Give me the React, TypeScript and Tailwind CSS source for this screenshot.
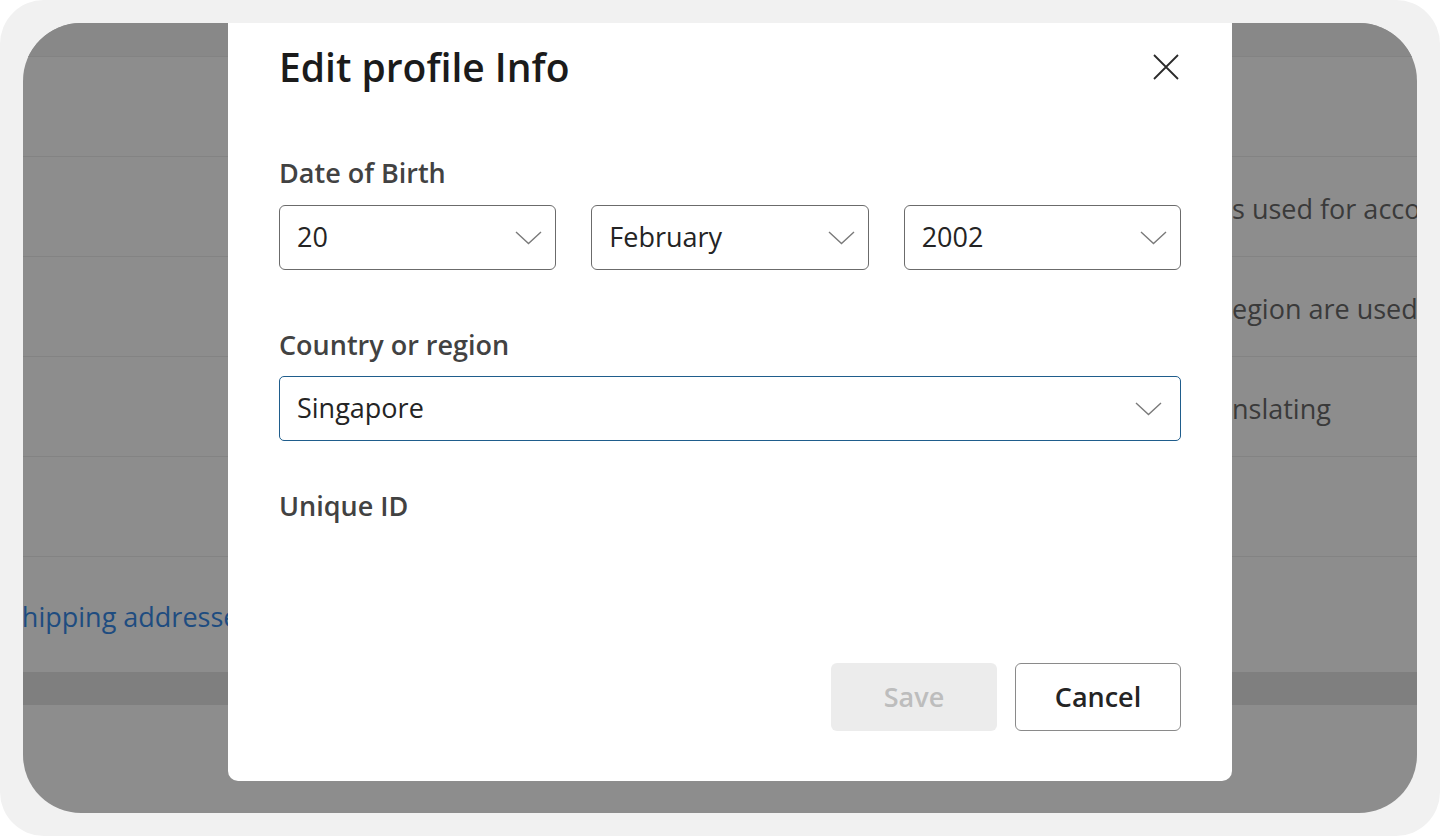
const font = { fontFamily: '"Open Sans", "Noto Sans", Arial, sans-serif' };

function Chevron() {
  return (
    <svg width="27" height="14" viewBox="0 0 27 14" fill="none" className="shrink-0">
      <polyline points="1,1 13.5,12.5 26,1" stroke="#7a7a7a" strokeWidth="1.4" />
    </svg>
  );
}

function Select({ value, focused }: { value: string; focused?: boolean }) {
  return (
    <div
      className={
        focused
          ? "flex h-[65px] items-center justify-between rounded-[5px] border-[1.5px] border-[#1f5d8c] bg-white pl-[17px] pr-[18px]"
          : "flex h-[65px] items-center justify-between rounded-[6px] border border-[#6b6b6b] bg-white pl-[17px] pr-[13px]"
      }
    >
      <span className="text-[27px] text-[#242424]">{value}</span>
      <Chevron />
    </div>
  );
}

function BackgroundRow({ prefix, text }: { prefix?: string; text?: string }) {
  return (
    <div className="flex h-[100px] items-center border-b border-[#838383] pt-[6px]">
      <div className="flex w-[1209px] shrink-0 justify-end overflow-hidden whitespace-nowrap text-[27px] text-[#3a3a3a]">
        {prefix}
      </div>
      <div className="whitespace-nowrap text-[27px] text-[#3a3a3a]">{text}</div>
    </div>
  );
}

export default function App() {
  return (
    <div className="h-[836px] w-[1440px] bg-white" style={font}>
      <div className="h-full w-full rounded-[44px] bg-[#f1f1f1] p-[23px]">
        <div className="relative h-full w-full overflow-hidden rounded-[58px] bg-[#8d8d8d]">
          {/* dimmed page behind the dialog */}
          <div className="flex flex-col">
            <div className="h-[34px] border-b border-[#838383] bg-[#888888]" />
            <BackgroundRow />
            <BackgroundRow prefix="Your date of birth i" text="s used for account safety settings" />
            <BackgroundRow prefix="Your country or r" text="egion are used for privacy and regional settings" />
            <BackgroundRow prefix="Your language is used when tra" text="nslating" />
            <BackgroundRow />
            <div className="flex h-[115px] items-center pt-[6px]">
              <span className="-ml-[14px] whitespace-nowrap text-[27px] text-[#1e4c80]">
                shipping addresses
              </span>
            </div>
            <div className="h-[33px] bg-[#7f7f7f]" />
            <div className="flex-1" />
          </div>

          {/* dialog */}
          <div className="absolute left-[205px] top-0 flex h-[758px] w-[1004px] flex-col rounded-b-[10px] bg-white px-[51px] pb-[50px] pt-[24px]">
            <div className="flex items-center justify-between">
              <h2 className="text-[39px] font-semibold leading-[40px] text-[#1b1b1b]">
                Edit profile Info
              </h2>
              <svg width="26" height="26" viewBox="0 0 26 26" className="mr-[2px]">
                <path d="M1 1 L25 25 M25 1 L1 25" stroke="#2a2a2a" strokeWidth="1.8" />
              </svg>
            </div>

            <div className="mt-[70px] text-[27px] font-semibold leading-[32px] text-[#424242]">
              Date of Birth
            </div>
            <div className="mt-[16px] grid grid-cols-3 gap-[35px]">
              <Select value="20" />
              <Select value="February" />
              <Select value="2002" />
            </div>

            <div className="mt-[59px] text-[27px] font-semibold leading-[32px] text-[#424242]">
              Country or region
            </div>
            <div className="mt-[15px]">
              <Select value="Singapore" focused />
            </div>

            <div className="mt-[49px] text-[27px] font-semibold leading-[32px] text-[#424242]">
              Unique ID
            </div>

            <div className="mt-auto flex justify-end gap-[18px]">
              <button className="h-[68px] w-[166px] rounded-[6px] bg-[#ececec] text-[27px] font-semibold text-[#bdbdbd]">
                Save
              </button>
              <button className="h-[68px] w-[166px] rounded-[6px] border border-[#8a8a8a] bg-white text-[27px] font-semibold text-[#242424]">
                Cancel
              </button>
            </div>
          </div>
        </div>
      </div>
    </div>
  );
}
